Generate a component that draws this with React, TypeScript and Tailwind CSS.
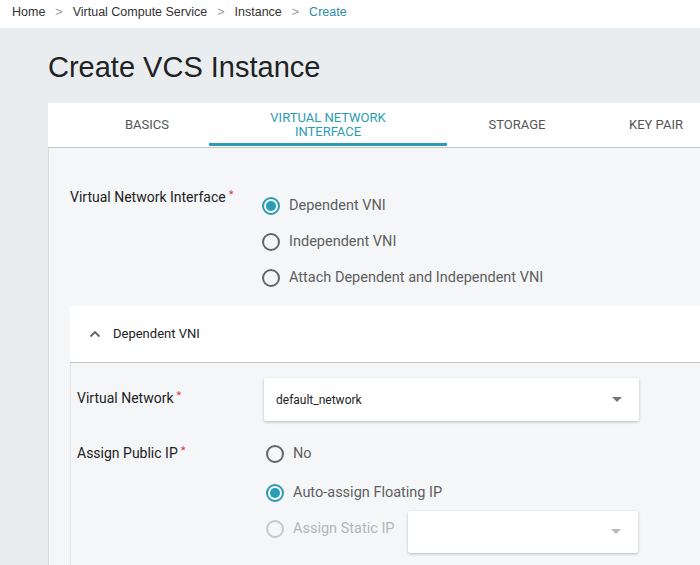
import React from 'react';

const Radio = ({ checked, disabled, label }: { checked?: boolean; disabled?: boolean; label: string }) => {
  return (
    <div className="flex items-center h-[36px]">
      <span
        className={`w-[18px] h-[18px] rounded-full border-2 flex items-center justify-center ${
          checked ? 'border-[#2a9db3]' : disabled ? 'border-[#c8c8c8]' : 'border-[#666]'
        }`}
      >
        {checked && <span className="w-[10px] h-[10px] rounded-full bg-[#2a9db3]" />}
      </span>
      <span className={`ml-[9px] text-[14.5px] ${disabled ? 'text-[#b5b5b5]' : 'text-[#5e5e5e]'}`}>{label}</span>
    </div>
  );
};

const Caret = () => (
  <svg width="10" height="6" viewBox="0 0 10 6" className="text-[#777]">
    <path d="M0 0 L10 0 L5 5 Z" fill="currentColor" />
  </svg>
);

const Req = () => <span className="text-[#e0393e] text-[11px] align-top ml-[3px]">*</span>;

export default function App() {
  const tabs = [
    { label: 'BASICS', w: 'w-[124px]' },
    { label: 'VIRTUAL NETWORK INTERFACE', w: 'w-[238px]', active: true },
    { label: 'STORAGE', w: 'w-[140px]' },
    { label: 'KEY PAIR', w: 'w-[138px]' },
  ];

  return (
    <div className="w-[700px] h-[565px] overflow-hidden bg-[#e9edf0] font-['Roboto',sans-serif]">
      {/* breadcrumb */}
      <div className="h-[28px] bg-white flex items-start pt-[3px] pl-[12px] text-[12.5px] font-['Liberation_Sans',Arial,sans-serif] text-[#333]">
        <span>Home</span>
        <span className="mx-[10px] text-[#999]">&gt;</span>
        <span>Virtual Compute Service</span>
        <span className="mx-[10px] text-[#999]">&gt;</span>
        <span>Instance</span>
        <span className="mx-[10px] text-[#999]">&gt;</span>
        <span className="text-[#2a8ea6]">Create</span>
      </div>

      <div className="pl-[48px]">
        <h1 className="h-[75px] flex items-center pt-[4px] text-[29px] text-[#222] font-['Liberation_Sans',Arial,sans-serif]">
          Create VCS Instance
        </h1>

        {/* tabs */}
        <div className="h-[45px] bg-white flex pl-[37px] border-b border-[#c4c4c4] w-[700px]">
          {tabs.map((t) => (
            <div
              key={t.label}
              className={`${t.w} shrink-0 flex items-center justify-center text-center text-[13px] leading-[14px] relative ${
                t.active ? 'text-[#2a9db3] px-[52px]' : 'text-[#555]'
              }`}
            >
              {t.label}
              {t.active && <span className="absolute left-0 right-0 bottom-[1px] h-[3px] bg-[#2a9db3]" />}
            </div>
          ))}
        </div>

        {/* content */}
        <div className="bg-[#f5f6f8] border-l border-[#d8dbde] h-[460px] pl-[21px] pt-[38px]">
          <div className="flex">
            <div className="w-[192px] text-[14px] text-[#222] pt-[1px]">
              Virtual Network Interface<Req />
            </div>
            <div className="pt-[2px]">
              <Radio checked label="Dependent VNI" />
              <Radio label="Independent VNI" />
              <Radio label="Attach Dependent and Independent VNI" />
            </div>
          </div>

          <div className="mt-[10px] h-[57px] bg-white border-b border-[#c4c4c4] flex items-center pl-[19px]">
            <svg width="12" height="8" viewBox="0 0 12 8" className="text-[#666]">
              <path d="M1.5 6.5 L6 2 L10.5 6.5" fill="none" stroke="currentColor" strokeWidth="1.8" />
            </svg>
            <span className="ml-[12px] text-[13px] text-[#222]">Dependent VNI</span>
          </div>

          <div className="h-[300px] border-l border-[#e2e4e7] pl-[6px] pt-[15px]">
            <div className="flex items-center">
              <div className="w-[187px] text-[14px] text-[#222] -mt-[2px]">
                Virtual Network<Req />
              </div>
              <div className="w-[375px] h-[43px] bg-white shadow-[0_1px_3px_rgba(0,0,0,0.25)] rounded-[2px] flex items-center justify-between pl-[12px] pr-[17px]">
                <span className="text-[12px] text-[#222]">default_network</span>
                <Caret />
              </div>
            </div>

            <div className="flex mt-[15px]">
              <div className="w-[189px] text-[14px] text-[#222] pt-[7px]">
                Assign Public IP<Req />
              </div>
              <div>
                <Radio label="No" />
                <div className="mt-[3px]">
                  <Radio checked label="Auto-assign Floating IP" />
                </div>
                <div className="flex items-start">
                  <Radio disabled label="Assign Static IP" />
                  <div className="ml-[13px] w-[230px] h-[42px] bg-white shadow-[0_1px_3px_rgba(0,0,0,0.25)] rounded-[2px] flex items-center justify-end pr-[17px]">
                    <span className="opacity-50"><Caret /></span>
                  </div>
                </div>
              </div>
            </div>
          </div>
        </div>
      </div>
    </div>
  );
}
